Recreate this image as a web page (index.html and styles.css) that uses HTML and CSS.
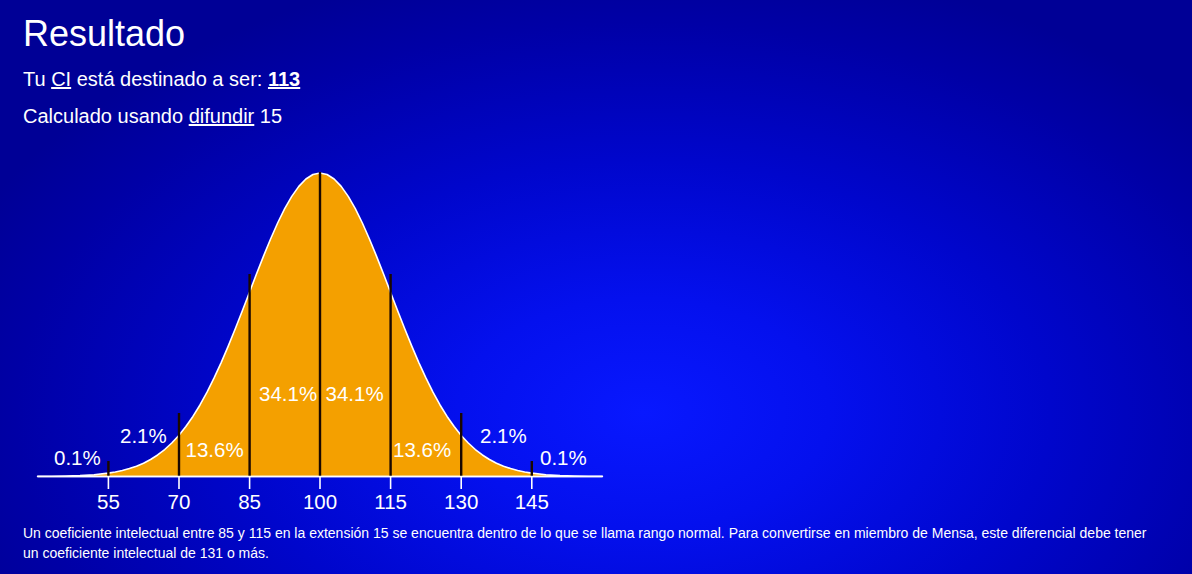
FILE: index.html
```html
<!DOCTYPE html>
<html lang="es">
<head>
<meta charset="utf-8">
<title>Resultado</title>
<link rel="stylesheet" href="styles.css">
</head>
<body>
<main class="result">
  <h1 class="result-title">Resultado</h1>
  <p class="result-line">Tu <a href="#" class="link">CI</a> está destinado a ser: <a href="#" class="link score">113</a></p>
  <p class="result-line">Calculado usando <a href="#" class="link">difundir</a> 15</p>
  <svg class="bell" width="600" height="382" viewBox="23 140 600 382" xmlns="http://www.w3.org/2000/svg">
    <g transform="translate(320 475.5) scale(70.6 -303.5)">
      <path class="curve" vector-effect="non-scaling-stroke" d="M-4,0.0003 L-3.8,0.0007 -3.6,0.0015 -3.4,0.0031 -3.2,0.0060 -3,0.0111 -2.9,0.0149 -2.8,0.0198 -2.7,0.0261 -2.6,0.0340 -2.5,0.0439 -2.4,0.0561 -2.3,0.0710 -2.2,0.0889 -2.1,0.1103 -2,0.1353 -1.9,0.1645 -1.8,0.1979 -1.7,0.2357 -1.6,0.2780 -1.5,0.3247 -1.4,0.3753 -1.3,0.4296 -1.2,0.4868 -1.1,0.5461 -1,0.6065 -0.9,0.6670 -0.8,0.7261 -0.7,0.7827 -0.6,0.8353 -0.5,0.8825 -0.4,0.9231 -0.3,0.9560 -0.2,0.9802 -0.1,0.9950 0,1 0.1,0.9950 0.2,0.9802 0.3,0.9560 0.4,0.9231 0.5,0.8825 0.6,0.8353 0.7,0.7827 0.8,0.7261 0.9,0.6670 1,0.6065 1.1,0.5461 1.2,0.4868 1.3,0.4296 1.4,0.3753 1.5,0.3247 1.6,0.2780 1.7,0.2357 1.8,0.1979 1.9,0.1645 2,0.1353 2.1,0.1103 2.2,0.0889 2.3,0.0710 2.4,0.0561 2.5,0.0439 2.6,0.0340 2.7,0.0261 2.8,0.0198 2.9,0.0149 3,0.0111 3.2,0.0060 3.4,0.0031 3.6,0.0015 3.8,0.0007 4,0.0003 L4,0 -4,0 Z"/>
    </g>
    <g class="dividers">
      <line x1="108.4" y1="460" x2="108.4" y2="475"/>
      <line x1="179" y1="412" x2="179" y2="475"/>
      <line x1="249.6" y1="273" x2="249.6" y2="475"/>
      <line x1="320" y1="171" x2="320" y2="475"/>
      <line x1="390.6" y1="273" x2="390.6" y2="475"/>
      <line x1="461.2" y1="412" x2="461.2" y2="475"/>
      <line x1="531.8" y1="460" x2="531.8" y2="475"/>
    </g>
    <g class="axis">
      <line x1="37.5" y1="475.5" x2="602.5" y2="475.5"/>
      <line x1="108.4" y1="475" x2="108.4" y2="488"/>
      <line x1="179" y1="475" x2="179" y2="488"/>
      <line x1="249.6" y1="475" x2="249.6" y2="488"/>
      <line x1="320" y1="475" x2="320" y2="488"/>
      <line x1="390.6" y1="475" x2="390.6" y2="488"/>
      <line x1="461.2" y1="475" x2="461.2" y2="488"/>
      <line x1="531.8" y1="475" x2="531.8" y2="488"/>
    </g>
    <g class="pct">
      <text x="54" y="463.5">0.1%</text>
      <text x="120" y="442">2.1%</text>
      <text x="185.5" y="455.5">13.6%</text>
      <text x="259" y="399.5">34.1%</text>
      <text x="325.5" y="399.5">34.1%</text>
      <text x="393" y="455.5">13.6%</text>
      <text x="480" y="442">2.1%</text>
      <text x="540" y="463.5">0.1%</text>
    </g>
    <g class="ticks">
      <text x="108.4" y="508">55</text>
      <text x="179" y="508">70</text>
      <text x="249.6" y="508">85</text>
      <text x="320" y="508">100</text>
      <text x="390.6" y="508">115</text>
      <text x="461.2" y="508">130</text>
      <text x="531.8" y="508">145</text>
    </g>
  </svg>
  <p class="note">Un coeficiente intelectual entre 85 y 115 en la extensión 15 se encuentra dentro de lo que se llama rango normal. Para convertirse en miembro de Mensa, este diferencial debe tener un coeficiente intelectual de 131 o más.</p>
</main>
</body>
</html>
```

FILE: styles.css
```css
html {
  height: 100%;
  background: #0000a8;
}

body {
  margin: 0;
  min-height: 100%;
  box-sizing: border-box;
  padding: 14px 23px 0;
  color: #ffffff;
  font-family: "Liberation Sans", Arial, sans-serif;
  background: radial-gradient(ellipse 62% 80% at 54% 72%, #0818ff 0%, #0410ee 25%, #0006cc 55%, #0000a6 85%, #000096 100%);
}

.result-title {
  margin: 0;
  font-size: 36px;
  line-height: 40px;
  font-weight: normal;
}

.result-line {
  margin: 13px 0 0;
  font-size: 20px;
  line-height: 24px;
}

.link {
  color: #ffffff;
  text-decoration: underline;
}

.score {
  font-weight: bold;
}

.bell {
  display: block;
  margin-top: 13px;
  overflow: visible;
}

.curve {
  fill: #f4a000;
  stroke: #ffffff;
  stroke-width: 1.6px;
  stroke-linejoin: round;
}

.dividers line {
  stroke: #1a0800;
  stroke-width: 2.4px;
}

.axis line {
  stroke: #ffffff;
  stroke-width: 1.6px;
}

.pct text,
.ticks text {
  fill: #ffffff;
  font-family: "Liberation Sans", Arial, sans-serif;
  font-size: 20.5px;
}

.ticks text {
  text-anchor: middle;
}

.note {
  margin: 0;
  max-width: 1135px;
  font-size: 14px;
  line-height: 20px;
}
```
